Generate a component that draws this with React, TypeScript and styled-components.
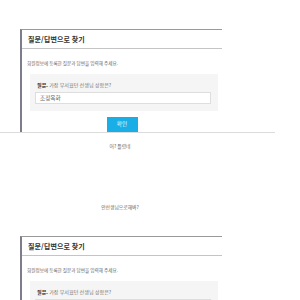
import React from "react";
import styled, { createGlobalStyle } from "styled-components";

const Global = createGlobalStyle`
  html, body { margin: 0; padding: 0; background: #fff; }
  body { font-family: "Noto Sans CJK KR", "Noto Sans", sans-serif; }
`;

const Page = styled.div`
  display: flex;
  flex-direction: column;
  width: 300px;
`;

const Shot = styled.div<{ $top: number; $line?: boolean }>`
  width: 275px;
  padding-top: ${(p) => p.$top}px;
  border-bottom: ${(p) => (p.$line ? "1px solid #dcdcdc" : "none")};
`;

const Card = styled.div`
  margin-left: 20px;
  width: 200px;
  border-top: 1px solid #9a9a9a;
  border-left: 2px solid #7c7c8a;
  display: flex;
  flex-direction: column;
`;

const CardTitle = styled.div`
  height: 18px;
  line-height: 18px;
  border-bottom: 1px solid #c4c4c4;
  padding-left: 6px;
  font-size: 7px;
  font-weight: 700;
  color: #333;
  letter-spacing: 0.1px;
`;

const Desc = styled.div`
  margin-top: 10px;
  padding-left: 5px;
  height: 8px;
  line-height: 8px;
  font-size: 4.6px;
  color: #666;
`;

const QBox = styled.div`
  margin: 7px 4px 0 8px;
  background: #f5f5f5;
  padding: 7px 7px 7px 5px;
  display: flex;
  flex-direction: column;
`;

const Label = styled.div`
  padding-left: 2px;
  height: 8px;
  line-height: 8px;
  font-size: 5.1px;
  color: #777;
  b {
    color: #333;
    font-weight: 700;
  }
`;

const Input = styled.div`
  margin-top: 3px;
  height: 10px;
  line-height: 10px;
  border: 1px solid #dedede;
  background: #fff;
  padding-left: 4px;
  font-size: 5.6px;
  color: #666;
`;

const ButtonRow = styled.div`
  display: flex;
  justify-content: center;
  margin-top: 6px;
`;

const Button = styled.div`
  width: 31px;
  height: 15px;
  line-height: 15px;
  background: #1aaee6;
  color: #e8f8ff;
  text-align: center;
  font-size: 5.6px;
`;

const Caption = styled.div<{ $top: number }>`
  width: 240px;
  margin-top: ${(p) => p.$top}px;
  height: 8px;
  line-height: 8px;
  text-align: center;
  font-size: 4.8px;
  color: #666;
`;

function FindCard({ withButton }: { withButton?: boolean }) {
  return (
    <Card>
      <CardTitle>질문/답변으로 찾기</CardTitle>
      <Desc>회원정보에 등록한 질문과 답변을 입력해 주세요.</Desc>
      <QBox>
        <Label>
          <b>질문.</b> 가장 무서웠던 선생님 성함은?
        </Label>
        <Input>조정옥화</Input>
      </QBox>
      {withButton && (
        <ButtonRow>
          <Button>확인</Button>
        </ButtonRow>
      )}
    </Card>
  );
}

export default function App() {
  return (
    <Page>
      <Global />
      <Shot $top={29} $line>
        <FindCard withButton />
      </Shot>
      <Caption $top={9}>어? 틀렸네</Caption>
      <Caption $top={53}>안선생님으로해봐?</Caption>
      <Shot $top={25}>
        <FindCard withButton />
      </Shot>
    </Page>
  );
}
